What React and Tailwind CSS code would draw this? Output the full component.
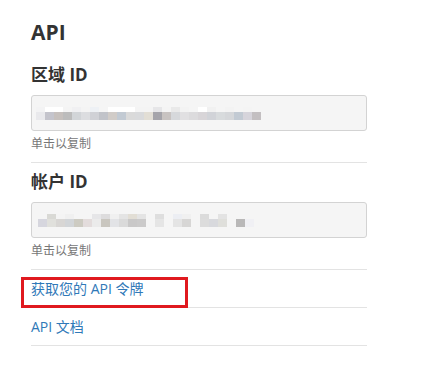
import React from 'react';

const font = { fontFamily: '"Open Sans", "Noto Sans CJK SC", sans-serif' };

const regionTop = ['bg-[#f3f3f4]', 'bg-white', 'bg-white', 'bg-[#f4f4f4]', 'bg-[#f0f0f2]', 'bg-[#f4f4f4]', 'bg-[#eef1f5]', 'bg-[#f5f5f5]', 'bg-white', 'bg-white', 'bg-white', 'bg-[#f4f4f4]', 'bg-[#f4f4f4]', 'bg-[#e6e6e8]', 'bg-[#f4f4f4]', 'bg-[#e9e9e9]', 'bg-[#f3f3f3]', 'bg-[#f5f5f5]', 'bg-white', 'bg-[#f1f1f1]', 'bg-[#f5f5f5]', 'bg-[#f3f3f3]', 'bg-[#f5f5f5]', 'bg-[#f4f4f4]', 'bg-[#f5f5f5]', 'bg-[#f5f5f5]'];
const regionBottom = ['bg-[#e9e9ec]', 'bg-[#c4c4cc]', 'bg-[#c6c0bd]', 'bg-[#bcbcbc]', 'bg-[#d2d5d8]', 'bg-[#dcdde0]', 'bg-[#d0d1d6]', 'bg-[#c1c3c9]', 'bg-[#d1ccc8]', 'bg-[#c2cad3]', 'bg-[#dadada]', 'bg-[#d9dadc]', 'bg-[#e2ded5]', 'bg-[#a5a4aa]', 'bg-[#c8c3c1]', 'bg-[#d6d8db]', 'bg-[#e1e0e2]', 'bg-[#dcdbdd]', 'bg-[#d8d5d8]', 'bg-[#d1d3d8]', 'bg-[#d8dbdd]', 'bg-[#d5d7da]', 'bg-[#c2cad3]', 'bg-[#d6d4db]', 'bg-[#c3bfc1]', 'bg-[#f5f5f5]'];

const accountTop = ['bg-[#f5f5f5]', 'bg-[#d9d9d5]', 'bg-[#f4f4f4]', 'bg-[#f0f0f0]', 'bg-[#f5f5f5]', 'bg-[#f5f5f5]', 'bg-[#e6e6e8]', 'bg-[#dddcdd]', 'bg-[#f0f0f0]', 'bg-[#e4e4e4]', 'bg-[#e2ded5]', 'bg-[#e4e4e4]', 'bg-[#f5f5f5]', 'bg-[#dedede]', 'bg-[#f5f5f5]', 'bg-[#eceef3]', 'bg-[#f0f0f0]', 'bg-[#f5f5f5]', 'bg-[#dbdbdb]', 'bg-[#f5f5f5]', 'bg-[#e3e3e3]', 'bg-[#f5f5f5]', 'bg-[#f5f5f5]', 'bg-[#f5f5f5]'];
const accountBottom = ['bg-[#d6d6de]', 'bg-[#e0e0dc]', 'bg-[#d8d6d4]', 'bg-[#d2d5d8]', 'bg-[#cdcbc2]', 'bg-[#e3dcdc]', 'bg-[#ebebeb]', 'bg-[#c9c6bf]', 'bg-[#e2e3e6]', 'bg-[#dadada]', 'bg-[#c9c8c8]', 'bg-[#cbcaca]', 'bg-[#f5f5f5]', 'bg-[#e5e5e5]', 'bg-[#f5f5f5]', 'bg-[#e4e4e4]', 'bg-[#d7d6d5]', 'bg-[#f5f5f5]', 'bg-[#dcdcdc]', 'bg-[#d8d9dd]', 'bg-[#dfdfdb]', 'bg-[#f5f5f5]', 'bg-[#b9b8b8]', 'bg-[#f0f0f4]'];

function BlurredValue({ top, bottom, offset }) {
  return (
    <div className={`h-[36px] w-full rounded-[3px] border border-[#d3d3d3] bg-[#f5f5f5] flex flex-col justify-center ${offset}`}>
      <div className="flex">
        {top.map((c, i) => <div key={i} className={`h-[5px] w-[9px] ${c}`} />)}
      </div>
      <div className="flex">
        {bottom.map((c, i) => <div key={i} className={`h-[8px] w-[9px] ${c}`} />)}
      </div>
    </div>
  );
}

function IdField({ label, top, bottom, offset }) {
  return (
    <div className="border-b border-[#e3e3e3] pb-[10px]">
      <h3 className="text-[17px] font-bold text-[#333] leading-[24px] mb-[8px]">{label}</h3>
      <BlurredValue top={top} bottom={bottom} offset={offset} />
      <p className="text-[12px] text-[#777] leading-[16px] mt-[5px]">单击以复制</p>
    </div>
  );
}

export default function App() {
  return (
    <div className="min-h-[369px] bg-white" style={font}>
      <div className="w-[336px] ml-[31px] pt-[18px]">
        <h2 className="text-[21px] font-bold text-[#333] leading-[28px] mb-[17px]">API</h2>
        <IdField label="区域 ID" top={regionTop} bottom={regionBottom} offset="pl-[4px]" />
        <div className="pt-[7px]">
          <IdField label="帐户 ID" top={accountTop} bottom={accountBottom} offset="pl-[6px]" />
        </div>
        <div className="relative">
          <a href="#" className="flex items-center h-[38px] border-b border-[#e3e3e3] text-[14px] text-[#2f79b8]">获取您的 API 令牌</a>
          <div className="absolute left-[-10px] top-[7px] w-[167px] h-[31px] border-[3px] border-[#e0191f]" />
          <a href="#" className="flex items-center h-[38px] border-b border-[#e3e3e3] text-[14px] text-[#2f79b8]">API 文档</a>
        </div>
      </div>
    </div>
  );
}
